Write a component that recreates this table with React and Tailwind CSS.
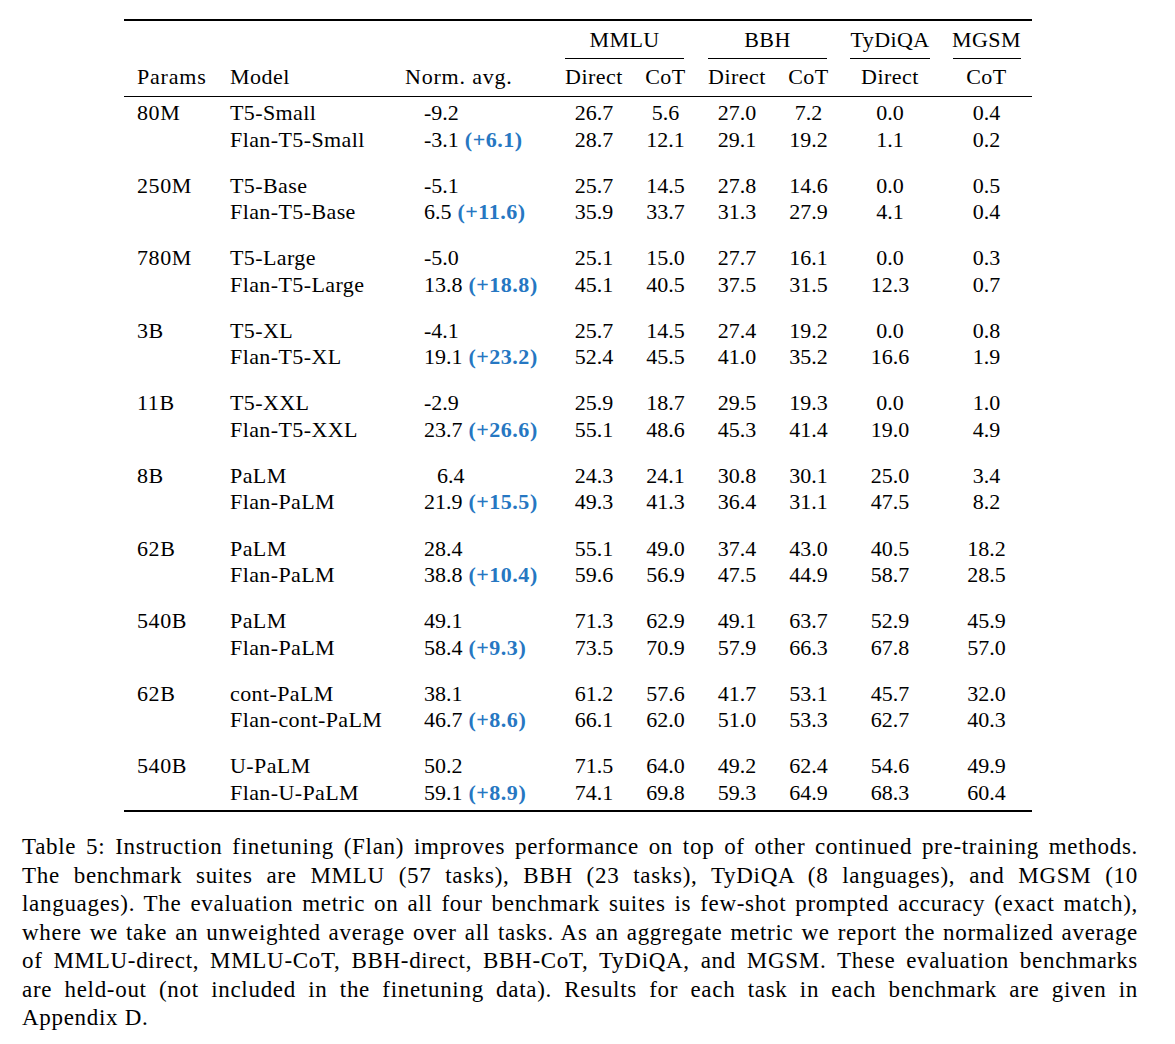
import React from "react";

const groups = [
  ["80M", [["T5-Small", "-9.2", null, false, ["26.7", "5.6", "27.0", "7.2", "0.0", "0.4"]], ["Flan-T5-Small", "-3.1", "+6.1", false, ["28.7", "12.1", "29.1", "19.2", "1.1", "0.2"]]]],
  ["250M", [["T5-Base", "-5.1", null, false, ["25.7", "14.5", "27.8", "14.6", "0.0", "0.5"]], ["Flan-T5-Base", "6.5", "+11.6", false, ["35.9", "33.7", "31.3", "27.9", "4.1", "0.4"]]]],
  ["780M", [["T5-Large", "-5.0", null, false, ["25.1", "15.0", "27.7", "16.1", "0.0", "0.3"]], ["Flan-T5-Large", "13.8", "+18.8", false, ["45.1", "40.5", "37.5", "31.5", "12.3", "0.7"]]]],
  ["3B", [["T5-XL", "-4.1", null, false, ["25.7", "14.5", "27.4", "19.2", "0.0", "0.8"]], ["Flan-T5-XL", "19.1", "+23.2", false, ["52.4", "45.5", "41.0", "35.2", "16.6", "1.9"]]]],
  ["11B", [["T5-XXL", "-2.9", null, false, ["25.9", "18.7", "29.5", "19.3", "0.0", "1.0"]], ["Flan-T5-XXL", "23.7", "+26.6", false, ["55.1", "48.6", "45.3", "41.4", "19.0", "4.9"]]]],
  ["8B", [["PaLM", "6.4", null, true, ["24.3", "24.1", "30.8", "30.1", "25.0", "3.4"]], ["Flan-PaLM", "21.9", "+15.5", false, ["49.3", "41.3", "36.4", "31.1", "47.5", "8.2"]]]],
  ["62B", [["PaLM", "28.4", null, false, ["55.1", "49.0", "37.4", "43.0", "40.5", "18.2"]], ["Flan-PaLM", "38.8", "+10.4", false, ["59.6", "56.9", "47.5", "44.9", "58.7", "28.5"]]]],
  ["540B", [["PaLM", "49.1", null, false, ["71.3", "62.9", "49.1", "63.7", "52.9", "45.9"]], ["Flan-PaLM", "58.4", "+9.3", false, ["73.5", "70.9", "57.9", "66.3", "67.8", "57.0"]]]],
  ["62B", [["cont-PaLM", "38.1", null, false, ["61.2", "57.6", "41.7", "53.1", "45.7", "32.0"]], ["Flan-cont-PaLM", "46.7", "+8.6", false, ["66.1", "62.0", "51.0", "53.3", "62.7", "40.3"]]]],
  ["540B", [["U-PaLM", "50.2", null, false, ["71.5", "64.0", "49.2", "62.4", "54.6", "49.9"]], ["Flan-U-PaLM", "59.1", "+8.9", false, ["74.1", "69.8", "59.3", "64.9", "68.3", "60.4"]]]],
];

const cols = "grid grid-cols-[94px_175px_160px_82px_61px_82px_61px_102px_91px]";

function Row({ params, r }) {
  const [model, avg, delta, pad, vals] = r;
  return (
    <div className={`${cols} h-[26.5px] leading-[26.5px]`}>
      <div className="pl-[13px] tracking-[0.6px]">{params}</div>
      <div className="pl-[12px] tracking-[0.4px]">{model}</div>
      <div className={pad ? "pl-[44px]" : "pl-[31px]"}>
        {avg}
        {delta && (
          <span className="font-bold text-[#2677c2] tracking-[0.5px]"> ({delta})</span>
        )}
      </div>
      {vals.map((v, i) => (
        <div key={i} className="text-center">{v}</div>
      ))}
    </div>
  );
}

const captionLines = [
  "Table 5: Instruction finetuning (Flan) improves performance on top of other continued pre-training methods.",
  "The benchmark suites are MMLU (57 tasks), BBH (23 tasks), TyDiQA (8 languages), and MGSM (10",
  "languages). The evaluation metric on all four benchmark suites is few-shot prompted accuracy (exact match),",
  "where we take an unweighted average over all tasks. As an aggregate metric we report the normalized average",
  "of MMLU-direct, MMLU-CoT, BBH-direct, BBH-CoT, TyDiQA, and MGSM. These evaluation benchmarks",
  "are held-out (not included in the finetuning data). Results for each task in each benchmark are given in",
];

export default function App() {
  return (
    <div className="w-[1175px] h-[1044px] bg-white text-black font-['Liberation_Serif',serif] text-[22px]">
      <div className="pt-[19px] pl-[124px]">
        <div className="w-[908px]">
          <div className="h-[2px] bg-black" />
          <div className={`${cols} mt-[6px] h-[26px] leading-[26px] tracking-[0.4px]`}>
            <div className="col-span-3" />
            <div className="col-span-2 text-center">MMLU</div>
            <div className="col-span-2 text-center">BBH</div>
            <div className="text-center">TyDiQA</div>
            <div className="text-center">MGSM</div>
          </div>
          <div className={`${cols} mt-[5px] h-px`}>
            <div className="col-span-3" />
            <div className="col-span-2 mx-[12px] bg-black" />
            <div className="col-span-2 mx-[12px] bg-black" />
            <div className="ml-[11px] mr-[11px] bg-black" />
            <div className="ml-[12px] mr-[11px] bg-black" />
          </div>
          <div className={`${cols} mt-[5px] h-[26px] leading-[26px] tracking-[0.5px]`}>
            <div className="pl-[13px] tracking-[0.8px]">Params</div>
            <div className="pl-[12px]">Model</div>
            <div className="pl-[12px] tracking-[0.8px]">Norm. avg.</div>
            <div className="text-center">Direct</div>
            <div className="text-center">CoT</div>
            <div className="text-center">Direct</div>
            <div className="text-center">CoT</div>
            <div className="text-center">Direct</div>
            <div className="text-center">CoT</div>
          </div>
          <div className="mt-[6px] h-px bg-black" />
          <div className="pt-[3px] flex flex-col gap-[19.6px]">
            {groups.map(([p, rows], gi) => (
              <div key={gi}>
                <Row params={p} r={rows[0]} />
                <Row params="" r={rows[1]} />
              </div>
            ))}
          </div>
          <div className="mt-[4px] h-[2px] bg-black" />
        </div>
      </div>
      <div className="mt-[21px] ml-[22px] w-[1116px] leading-[28.5px] text-[23px] tracking-[0.7px]">
        {captionLines.map((l, i) => (
          <div key={i} className="text-justify [text-align-last:justify]">{l}</div>
        ))}
        <div>Appendix D.</div>
      </div>
    </div>
  );
}
